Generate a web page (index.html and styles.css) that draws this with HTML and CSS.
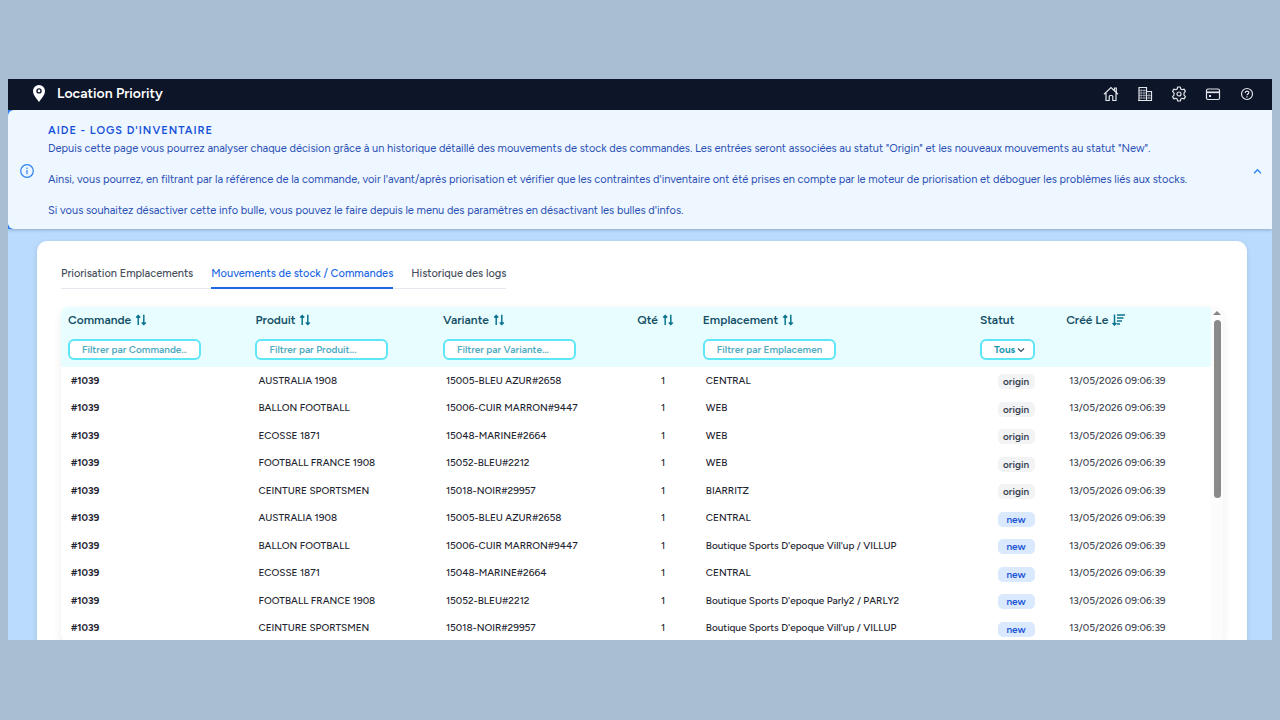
FILE: index.html
```html
<!DOCTYPE html>
<html lang="fr">
<head>
    <meta charset="UTF-8">
    <title>Location Priority</title>
    <link rel="stylesheet" href="styles.css">
</head>
<body>
    <svg class="sprite" aria-hidden="true">
        <symbol id="sort" viewBox="0 0 12 12">
            <path d="M3.200 11V1.500M1.200 3.600L3.200 1.500L5.200 3.600M8.800 .8V10.500M6.800 8.400L8.800 10.500L10.800 8.400" fill="none" stroke="currentColor" stroke-width="1.5"/>
        </symbol>
    </svg>

    <div class="app">
        <header class="topbar">
            <svg class="pin" viewBox="0 0 12 17">
                <path fill="#fff" fill-rule="evenodd" d="M6 0a6 6 0 0 0-6 6c0 3.500 3 7 6 11 3-4 6-7.500 6-11a6 6 0 0 0-6-6zm0 3.200a2.700 2.700 0 1 1 0 5.400 2.700 2.700 0 0 1 0-5.400z"/>
                <circle cx="6" cy="5.900" r="1.300" fill="#fff"/>
            </svg>
            <span class="brand">Location Priority</span>
            <nav class="nav">
                <a href="#" aria-label="Accueil">
                    <svg viewBox="0 0 16 16"><path d="M1 8.300L8 1.500l7 6.800M11.500 4.500V2h1.800v4.200M3 7v7.500h3.200v-4a1 1 0 0 1 1-1h1.600a1 1 0 0 1 1 1v4H13V7"/></svg>
                </a>
                <a href="#" aria-label="Emplacements">
                    <svg viewBox="0 0 16 16"><path d="M2 14.500V1.500h7.500v13M9.500 5.500h5v9M1 14.500h14"/><path stroke-dasharray="1 1" stroke-width="1" d="M4.200 3.500V13M7 3.500V13M12 7.500V13"/><path stroke-width=".5" d="M2 4.500h7M2 7h7M2 9.500h12M2 12h12"/></svg>
                </a>
                <a href="#" aria-label="Paramètres">
                    <svg viewBox="0 0 16 16"><path stroke-linejoin="round" d="M6.700 1h2.600l.5 2 1.300.7 2-.6 1.300 2.300L13 6.900v2.200l1.400 1.500-1.300 2.300-2-.6-1.300.7-.5 2H6.700l-.5-2-1.300-.7-2 .6-1.300-2.300L3 9.100V6.900L1.600 5.400l1.300-2.300 2 .6L6.200 3z"/><circle cx="8" cy="8" r="2"/></svg>
                </a>
                <a href="#" aria-label="Facturation">
                    <svg viewBox="0 0 16 16"><rect x="1.500" y="3" width="13" height="10.500" rx="1.500"/><path stroke-width="1.700" d="M1.500 6.300h13"/><path stroke-width="2" d="M4 10h2"/></svg>
                </a>
                <a href="#" aria-label="Aide">
                    <svg viewBox="0 0 16 16"><circle cx="8" cy="8" r="5.500"/><path d="M6.200 6.900c0-2.400 3.600-2.400 3.600-.2 0 1.300-1.800 1.200-1.800 2.500M8 10.200v1.300"/></svg>
                </a>
            </nav>
        </header>

        <section class="help">
            <div class="help-body">
                <svg class="info" viewBox="0 0 14 14"><circle cx="7" cy="7" r="6.300"/><path d="M7 6v4.300M7 3.600v1.300"/></svg>
                <div class="help-text">
                    <h2>AIDE - LOGS D'INVENTAIRE</h2>
                    <p>Depuis cette page vous pourrez analyser chaque décision grâce à un historique détaillé des mouvements de stock des commandes. Les entrées seront associées au statut "Origin" et les nouveaux mouvements au statut "New".</p>
                    <p>Ainsi, vous pourrez, en filtrant par la référence de la commande, voir l'avant/après priorisation et vérifier que les contraintes d'inventaire ont été prises en compte par le moteur de priorisation et déboguer les problèmes liés aux stocks.</p>
                    <p>Si vous souhaitez désactiver cette info bulle, vous pouvez le faire depuis le menu des paramètres en désactivant les bulles d'infos.</p>
                </div>
                <button class="collapse" aria-label="Réduire"><svg viewBox="0 0 8 8"><path d="M1 5.500L4 2.500l3 3"/></svg></button>
            </div>
        </section>

        <main class="card">
            <nav class="tabs">
                <a href="#">Priorisation Emplacements</a>
                <a href="#" class="active">Mouvements de stock / Commandes</a>
                <a href="#">Historique des logs</a>
            </nav>

            <div class="table-box">
                <table class="logs">
                    <colgroup>
                        <col class="c-order"><col class="c-product"><col class="c-variant"><col class="c-qty"><col class="c-place"><col class="c-status"><col class="c-date">
                    </colgroup>
                    <thead>
                        <tr>
                            <th><span class="label">Commande <svg><use href="#sort"/></svg></span><input type="text" aria-label="Commande" placeholder="Filtrer par Commande..."></th>
                            <th><span class="label">Produit <svg><use href="#sort"/></svg></span><input type="text" aria-label="Produit" placeholder="Filtrer par Produit..."></th>
                            <th><span class="label">Variante <svg><use href="#sort"/></svg></span><input type="text" aria-label="Variante" placeholder="Filtrer par Variante..."></th>
                            <th><span class="label">Qté <svg><use href="#sort"/></svg></span></th>
                            <th><span class="label">Emplacement <svg><use href="#sort"/></svg></span><input type="text" aria-label="Emplacement" placeholder="Filtrer par Emplacement..."></th>
                            <th>
                                <span class="label">Statut</span>
                                <span class="select">
                                    <select aria-label="Statut"><option>Tous</option><option>origin</option><option>new</option></select>
                                    <svg viewBox="0 0 8 8"><path d="M1 2.500l3 3 3-3"/></svg>
                                </span>
                            </th>
                            <th><span class="label">Créé Le <svg class="sort-desc" viewBox="0 0 13 12"><path d="M2.500 .5v10.500M.5 8.900l2 2.100 2-2.100M5 1h8M5 4h6.500M5 7h5M5 10h3"/></svg></span></th>
                        </tr>
                    </thead>
                    <tbody id="rows"></tbody>
                </table>
                <div class="scrollbar"><span class="arrow"></span><span class="thumb"></span></div>
            </div>
        </main>
    </div>

    <script src="script.js"></script>
</body>
</html>
```

FILE: styles.css
```css
* {
    box-sizing: border-box;
}
body {
    margin: 0;
    height: 100vh;
    padding: 79px 8px 80px;
    background: #a9bdd3;
    font-family: Figtree, Inter, sans-serif;
    display: flex;
}
a {
    color: inherit;
    text-decoration: none;
}
.sprite {
    display: none;
}
.app {
    flex: 1;
    min-width: 0;
    overflow: hidden;
    background: #badbfb;
}
.topbar {
    display: flex;
    align-items: center;
    height: 31px;
    padding: 0 17px 2px 25px;
    background: #0d1528;
    color: #fff;
}
.pin {
    width: 12px;
    height: 17px;
}
.brand {
    margin-left: 12px;
    font-size: 14px;
    line-height: 17px;
    font-weight: 600;
}
.nav {
    display: flex;
    gap: 18px;
    margin-left: auto;
}
.nav a {
    display: flex;
}
.nav svg {
    width: 16px;
    height: 16px;
    fill: none;
    stroke: #e2e5ea;
    stroke-width: 1.2;
}
.help {
    background: #2b83f6;
    box-shadow: 0 1px 3px rgba(30, 60, 110, 0.3);
}
.help-body {
    display: flex;
    align-items: center;
    padding: 13px 10px 10px 12px;
    border-radius: 6px 0 0 6px;
    background: #eef6ff;
    color: #2a50b4;
}
.info {
    width: 14px;
    height: 14px;
    flex: none;
    fill: none;
    stroke: #2b83f6;
    stroke-width: 1.2;
}
.help-text {
    flex: 1;
    padding-left: 14px;
    white-space: nowrap;
}
.help h2 {
    margin: 0 0 2px;
    font-size: 11px;
    line-height: 16px;
    font-weight: 600;
    letter-spacing: 1px;
    color: #1550d8;
}
.help p {
    margin: 0 0 15px;
    font-size: 11px;
    line-height: 16px;
}
.help p:last-child {
    margin: 0;
}
.collapse {
    display: flex;
    padding: 0;
    border: 0;
    background: none;
}
.collapse svg {
    width: 9px;
    height: 9px;
    fill: none;
    stroke: #2b83f6;
    stroke-width: 1.2;
}
.card {
    margin: 12px 25px 0 29px;
    padding: 24px 24px 0;
    min-height: 420px;
    border-radius: 10px;
    background: #fff;
    box-shadow: 0 2px 5px rgba(30, 60, 110, 0.15);
}
.tabs {
    display: flex;
    width: max-content;
    gap: 18px;
    box-shadow: inset 0 -1px #e6e8f0;
    font-size: 11px;
    line-height: 17px;
    font-weight: 500;
    color: #474f5c;
}
.tabs a {
    padding-bottom: 5px;
    border-bottom: 2px solid transparent;
}
.tabs .active {
    color: #1c68e3;
    border-color: #1c68e3;
}
.table-box {
    display: flex;
    margin-top: 18px;
    border-radius: 8px;
    overflow: hidden;
    box-shadow: 0 4px 10px rgba(0, 0, 0, 0.07);
}
.logs {
    flex: 1;
    table-layout: fixed;
    border-collapse: collapse;
    font-size: 10px;
    color: #1d2430;
}
.c-order, .c-product { width: 16.3%; }
.c-variant { width: 16.9%; }
.c-qty { width: 5.7%; }
.c-place { width: 24.1%; }
.c-status { width: 7.5%; }
.c-date { width: 13.2%; }
.logs th {
    height: 60px;
    padding: 5px 7px 7px;
    background: #e8fdff;
    text-align: left;
    vertical-align: top;
    color: #155066;
}
.label {
    display: flex;
    align-items: center;
    gap: 4px;
    margin-bottom: 11px;
    font-size: 12px;
    line-height: 16px;
    font-weight: 600;
    white-space: nowrap;
}
.label svg {
    width: 12px;
    height: 12px;
    flex: none;
    color: #0d7490;
}
.label .sort-desc {
    width: 13px;
    fill: none;
    stroke: currentColor;
    stroke-width: 1.5;
}
.logs input, .logs select {
    display: block;
    height: 21px;
    padding: 0 12px;
    border: 2px solid #5fe6f6;
    border-radius: 6px;
    background: #fff;
    font-family: inherit;
    font-size: 10px;
    font-weight: 600;
    color: #1d98b3;
}
.logs input {
    width: 133px;
}
.logs input::placeholder {
    color: #4fabc0;
}
.select {
    position: relative;
    display: block;
    width: 55px;
}
.logs select {
    width: 100%;
    appearance: none;
    padding-right: 0;
    font-weight: 700;
}
.select svg {
    position: absolute;
    right: 10px;
    top: 7px;
    width: 8px;
    height: 8px;
    fill: none;
    stroke: #30505e;
    stroke-width: 1.2;
    pointer-events: none;
}
.logs td {
    height: 28px;
    padding: 0 10px 2px;
    white-space: nowrap;
    font-weight: 500;
}
.logs tr:nth-child(even) td {
    height: 27px;
}
.logs td:first-child {
    font-weight: 700;
}
.logs .center {
    padding: 0 0 2px;
    text-align: center;
}
.logs .date {
    color: #3c4350;
}
.badge {
    display: block;
    width: 37px;
    margin: 3px auto 0;
    border-radius: 5px;
    line-height: 15px;
    font-weight: 600;
}
.badge.origin {
    background: #f2f3f5;
    color: #374151;
}
.badge.new {
    background: #dae9fd;
    color: #1c55d8;
}
.scrollbar {
    width: 12px;
    padding-top: 4px;
    background: #fcfcfc;
    display: flex;
    flex-direction: column;
    align-items: center;
    gap: 5px;
}
.arrow {
    border: 4px solid transparent;
    border-top: 0;
    border-bottom: 4px solid #858585;
}
.thumb {
    width: 7px;
    height: 178px;
    border-radius: 4px;
    background: #8a8a8a;
}
```

FILE: script.js
```js
const logs = [
    ["AUSTRALIA 1908", "15005-BLEU AZUR#2658", "CENTRAL", "origin"],
    ["BALLON FOOTBALL", "15006-CUIR MARRON#9447", "WEB", "origin"],
    ["ECOSSE 1871", "15048-MARINE#2664", "WEB", "origin"],
    ["FOOTBALL FRANCE 1908", "15052-BLEU#2212", "WEB", "origin"],
    ["CEINTURE SPORTSMEN", "15018-NOIR#29957", "BIARRITZ", "origin"],
    ["AUSTRALIA 1908", "15005-BLEU AZUR#2658", "CENTRAL", "new"],
    ["BALLON FOOTBALL", "15006-CUIR MARRON#9447", "Boutique Sports D'epoque Vill'up / VILLUP", "new"],
    ["ECOSSE 1871", "15048-MARINE#2664", "CENTRAL", "new"],
    ["FOOTBALL FRANCE 1908", "15052-BLEU#2212", "Boutique Sports D'epoque Parly2 / PARLY2", "new"],
    ["CEINTURE SPORTSMEN", "15018-NOIR#29957", "Boutique Sports D'epoque Vill'up / VILLUP", "new"]
];

document.getElementById("rows").innerHTML = logs.map(([product, variant, place, status]) => `
    <tr>
        <td>#1039</td>
        <td>${product}</td>
        <td>${variant}</td>
        <td class="center">1</td>
        <td>${place}</td>
        <td class="center"><span class="badge ${status}">${status}</span></td>
        <td class="date">13/05/2026 09:06:39</td>
    </tr>`).join("");
```
